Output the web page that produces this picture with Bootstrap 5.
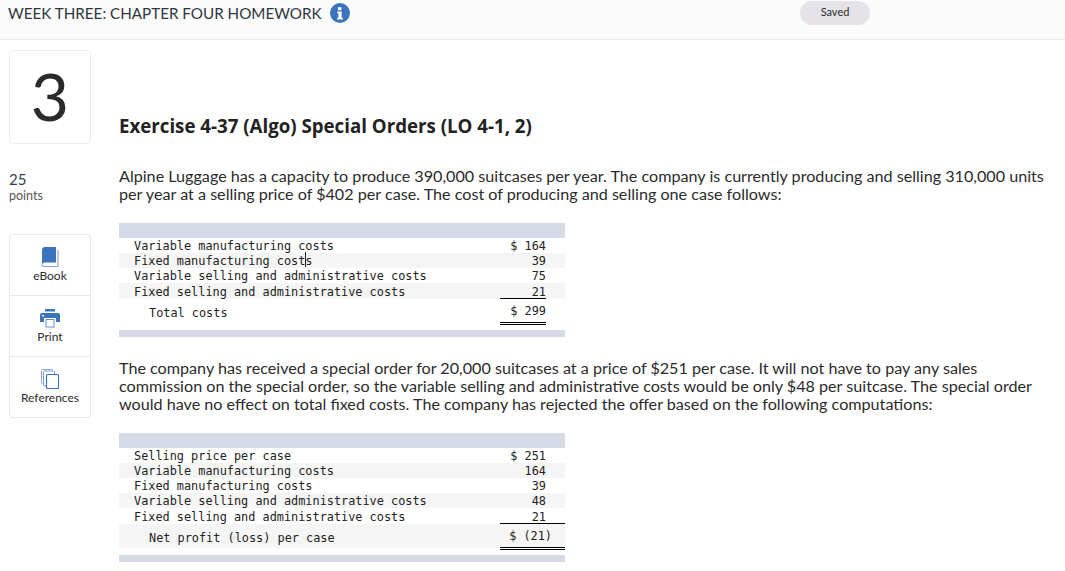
<!DOCTYPE html>
<html lang="en">
<head>
  <meta charset="UTF-8" />
  <title>Week Three: Chapter Four Homework</title>
  <link href="https://cdn.jsdelivr.net/npm/bootstrap@5.3.3/dist/css/bootstrap.min.css" rel="stylesheet">
  <style>
    body {
      font-family: Lato, "Open Sans", sans-serif;
      color: #2b2b2b;
      background: #fff;
      overflow: hidden;
    }
    .top-strip {
      height: 40px;
      background: #fbfbfb;
      border-bottom: 1px solid #ececec;
      padding-left: 8px;
    }
    .top-title { font-size: 15.2px; line-height: 24px; height: 26px; color: #2f3640; }
    .saved-pill {
      width: 70px;
      height: 24px;
      margin: 1px 195px 0 0;
      background: #e5e3e7;
      border-radius: 12px;
      font-size: 11px;
      line-height: 22px;
      text-align: center;
    }
    .side-col { width: 119px; padding-left: 9px; flex: none; }
    .num-box {
      width: 82px;
      height: 94px;
      margin-top: 10px;
      border: 1px solid #ececec;
      border-radius: 4px;
      font-size: 66px;
      line-height: 90px;
      text-align: center;
    }
    .pts-num { margin-top: 26px; font-size: 15px; line-height: 18px; color: #2f3d4f; }
    .pts-label { font-size: 12.5px; line-height: 15px; color: #555; }
    .tool-box { width: 82px; margin-top: 31px; border: 1px solid #e8e8e8; border-radius: 4px; }
    .tool-item {
      height: 61px;
      font-size: 12px;
      line-height: 14px;
      text-align: center;
      padding-top: 12px;
    }
    .tool-item:first-child { height: 60px; }
    .tool-item + .tool-item { border-top: 1px solid #e8e8e8; }
    .tool-item svg { display: block; margin: 0 auto 2px; }
    .main-col { width: 930px; }
    .ex-title { font-family: "Open Sans", sans-serif; font-size: 18.7px; font-weight: 700; line-height: 22px; margin: 75px 0 30px; color: #222; }
    .ex-text { font-size: 16.15px; line-height: 18px; margin: 0; }
    .gap-after { margin-bottom: 20px; }
    .gap-around { margin: 22px 0 20px; }
    .cost-wrap { width: 446px; border-top: 15px solid #d6dae6; border-bottom: 7px solid #d6dae6; }
    .cost-grid { width: 100%; font-family: "DejaVu Sans Mono", monospace; font-size: 11.87px; line-height: 14px; color: #222; }
    .cost-grid td { padding: 1px 0 0; white-space: nowrap; }
    .cost-grid .lbl { padding-left: 15px; }
    .cost-grid .val { width: 46px; text-align: right; }
    .cost-grid .tail { width: 19px; }
    .cost-grid .wide-val { width: 65px; text-align: right; padding-right: 19px; }
    .cost-grid .shade td { background: #f5f5f5; }
    .cost-grid .sub { box-shadow: inset 0 -1px 0 #000; }
    .cost-grid .before-total td { padding-top: 2px; }
    .cost-grid .total-row td { height: 24px; }
    .cost-grid .total-row .lbl { padding-left: 30px; padding-top: 4px; }
    .cost-grid .total-row .val,
    .cost-grid .total-row .wide-val { vertical-align: top; padding-top: 5px; border-bottom: 3px double #000; }
    .cost-grid .total-row .wide-val { padding-right: 13px; }
    .cost-grid .after-gap td { height: 7px; padding: 0; }
    .caret-spot { position: relative; }
    .caret-spot::after {
      content: "";
      position: absolute;
      left: 0;
      top: -2px;
      width: 1px;
      height: 15px;
      background: #222;
    }
  </style>
</head>
<body>
  <div class="top-strip d-flex justify-content-between">
    <div class="top-title d-flex align-items-center gap-2">
      WEEK THREE: CHAPTER FOUR HOMEWORK
      <svg width="20" height="20" viewBox="0 0 20 20"><circle cx="10" cy="10" r="10" fill="#3b74bd"/><path d="M8 4.2h3.4v3H8zM7.2 8.6h4.4v6.2h1.2v1.6H7.2v-1.6h1.2v-4.6H7.2z" fill="#fff"/></svg>
    </div>
    <div class="saved-pill">Saved</div>
  </div>

  <div class="d-flex">
    <div class="side-col">
      <div class="num-box">3</div>
      <div class="pts-num">25</div>
      <div class="pts-label">points</div>
      <div class="tool-box">
        <div class="tool-item">
          <svg width="18" height="20" viewBox="0 0 18 20"><path d="M1 3a3 3 0 0 1 3-3h11v15.500H4a3 3 0 0 0-3 2z" fill="#3b74bd"/><path d="M1 17.500a2 2 0 0 0 2 2H17V3" fill="none" stroke="#8aa9d8" stroke-width="1.200"/></svg>
          eBook
        </div>
        <div class="tool-item">
          <svg width="20" height="20" viewBox="0 0 20 20"><path d="M5 1h10v2.500H5z" fill="#3b74bd"/><path d="M2 5h16a2 2 0 0 1 2 2v6.500a.5.5 0 0 1-.5.5H16v-4H4v4H.5a.5.5 0 0 1-.5-.5V7a2 2 0 0 1 2-2z" fill="#3b74bd"/><rect x="2" y="7" width="2" height="1.500" fill="#fff"/><rect x="6" y="11.500" width="8" height="7.500" fill="#fff" stroke="#6d8fc8"/></svg>
          Print
        </div>
        <div class="tool-item">
          <svg width="18" height="20" viewBox="0 0 18 20" fill="#fff"><rect x="0.500" y="0.500" width="11" height="14" rx="1" stroke="#8fa6d8"/><rect x="2.500" y="2" width="11" height="15" rx="1" stroke="#7f9ad4"/><rect x="5.500" y="5.500" width="12" height="14" rx="1" stroke="#3b74bd" stroke-width="1.200"/></svg>
          References
        </div>
      </div>
    </div>

    <div class="main-col">
      <h1 class="ex-title">Exercise 4-37 (Algo) Special Orders (LO 4-1, 2)</h1>
      <p class="ex-text gap-after">Alpine Luggage has a capacity to produce 390,000 suitcases per year. The company is currently producing and selling 310,000 units per year at a selling price of $402 per case. The cost of producing and selling one case follows:</p>

      <div class="cost-wrap">
        <table class="cost-grid">
          <tr><td class="lbl">Variable manufacturing costs</td><td class="val">$ 164</td><td class="tail"></td></tr>
          <tr class="shade"><td class="lbl">Fixed manufacturing cost<span class="caret-spot"></span>s</td><td class="val">39</td><td class="tail"></td></tr>
          <tr><td class="lbl">Variable selling and administrative costs</td><td class="val">75</td><td class="tail"></td></tr>
          <tr class="shade before-total"><td class="lbl">Fixed selling and administrative costs</td><td class="val sub">21</td><td class="tail"></td></tr>
          <tr class="total-row"><td class="lbl">Total costs</td><td class="val">$ 299</td><td class="tail"></td></tr>
          <tr class="after-gap"><td colspan="3"></td></tr>
        </table>
      </div>

      <p class="ex-text gap-around">The company has received a special order for 20,000 suitcases at a price of $251 per case. It will not have to pay any sales commission on the special order, so the variable selling and administrative costs would be only $48 per suitcase. The special order would have no effect on total fixed costs. The company has rejected the offer based on the following computations:</p>

      <div class="cost-wrap">
        <table class="cost-grid">
          <tr><td class="lbl">Selling price per case</td><td class="val">$ 251</td><td class="tail"></td></tr>
          <tr class="shade"><td class="lbl">Variable manufacturing costs</td><td class="val">164</td><td class="tail"></td></tr>
          <tr><td class="lbl">Fixed manufacturing costs</td><td class="val">39</td><td class="tail"></td></tr>
          <tr class="shade"><td class="lbl">Variable selling and administrative costs</td><td class="val">48</td><td class="tail"></td></tr>
          <tr class="before-total"><td class="lbl">Fixed selling and administrative costs</td><td class="wide-val sub" colspan="2">21</td></tr>
          <tr class="shade total-row"><td class="lbl">Net profit (loss) per case</td><td class="wide-val" colspan="2">$ (21)</td></tr>
          <tr class="after-gap"><td colspan="3"></td></tr>
        </table>
      </div>
    </div>
  </div>
  <script src="https://cdn.jsdelivr.net/npm/bootstrap@5.3.3/dist/js/bootstrap.bundle.min.js"></script>
</body>
</html>
